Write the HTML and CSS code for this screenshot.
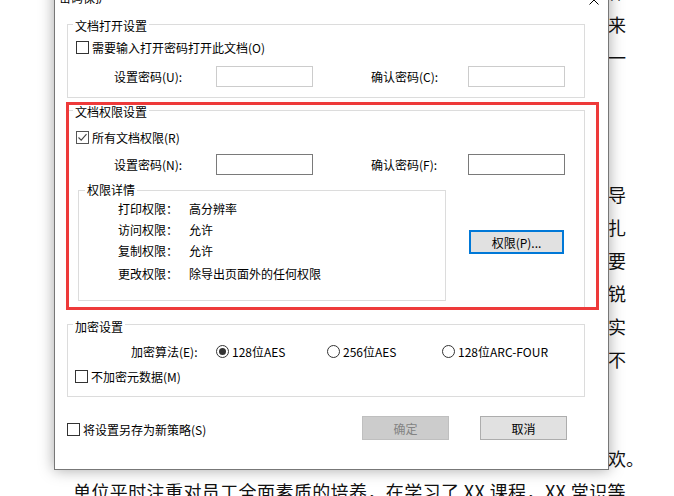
FILE: index.html
```html
<!DOCTYPE html>
<html lang="zh-CN">
<head>
    <meta charset="UTF-8">
    <title>密码保护</title>
    <link rel="stylesheet" href="styles.css">
</head>
<body>
<div class="doc">
    <div class="line">作</div>
    <div class="line">来</div>
    <div class="line">一</div>
    <div class="line"></div>
    <div class="line"></div>
    <div class="line"></div>
    <div class="line para">导</div>
    <div class="line">扎</div>
    <div class="line">要</div>
    <div class="line">锐</div>
    <div class="line">实</div>
    <div class="line">不</div>
    <div class="line"></div>
    <div class="line"></div>
    <div class="line">欢。</div>
    <div class="line first">单位平时注重对员工全面素质的培养，在学习了 XX 课程，XX 常识等</div>
</div>

<div class="dialog">
    <div class="titlebar">
        <span class="title">密码保护</span>
        <svg class="close" width="10" height="10" viewBox="0 0 10 10">
            <path d="M0.5 0.5 L9.5 9.5 M9.5 0.5 L0.5 9.5" stroke="#000" stroke-width="1" fill="none"/>
        </svg>
    </div>
    <div class="dlg-body">
        <!-- 文档打开设置 -->
        <div class="group open-group">
            <div class="group-title">文档打开设置</div>
            <div class="chk-row"><span class="chk"></span>需要输入打开密码打开此文档(O)</div>
            <div class="pw-row">
                <span class="pw-label">设置密码(U):</span>
                <input class="pw-input" type="password" disabled>
                <span class="pw-label second">确认密码(C):</span>
                <input class="pw-input" type="password" disabled>
            </div>
        </div>

        <!-- 文档权限设置 -->
        <div class="group perm-group">
            <div class="group-title">文档权限设置</div>
            <div class="chk-row"><span class="chk on">
                <svg width="11" height="11" viewBox="0 0 11 11"><path d="M1.5 5.5 L4.2 8.2 L9.5 2.2" stroke="#444" stroke-width="1.1" fill="none"/></svg>
            </span>所有文档权限(R)</div>
            <div class="pw-row">
                <span class="pw-label">设置密码(N):</span>
                <input class="pw-input" type="password">
                <span class="pw-label second">确认密码(F):</span>
                <input class="pw-input" type="password">
            </div>
            <div class="detail-wrap">
                <div class="group detail">
                    <div class="group-title">权限详情</div>
                    <div class="detail-row"><span class="detail-label">打印权限：</span>高分辨率</div>
                    <div class="detail-row"><span class="detail-label">访问权限：</span>允许</div>
                    <div class="detail-row"><span class="detail-label">复制权限：</span>允许</div>
                    <div class="detail-row last"><span class="detail-label">更改权限：</span>除导出页面外的任何权限</div>
                </div>
                <button class="btn focus perm-btn">权限(P)...</button>
            </div>
        </div>

        <!-- 加密设置 -->
        <div class="group enc-group">
            <div class="group-title">加密设置</div>
            <div class="radio-row">
                <span class="radio-label">加密算法(E):</span>
                <span class="radio-opt w1"><span class="radio on"></span>128位AES</span>
                <span class="radio-opt w2"><span class="radio"></span>256位AES</span>
                <span class="radio-opt"><span class="radio"></span>128位ARC-FOUR</span>
            </div>
            <div class="chk-row"><span class="chk"></span>不加密元数据(M)</div>
        </div>

        <div class="footer">
            <div class="chk-row"><span class="chk"></span>将设置另存为新策略(S)</div>
            <div class="btns">
                <button class="btn" disabled>确定</button>
                <button class="btn">取消</button>
            </div>
        </div>
    </div>
</div>

<div class="mark"></div>
</body>
</html>
```

FILE: styles.css
```css
*{
    margin: 0;
    padding: 0;
    box-sizing: border-box;
}
body{
    position: relative;
    height: 496px;
    overflow: hidden;
    background: #fff;
    color: #000;
    font-family: "Noto Sans CJK SC", "Noto Sans", sans-serif;
}

/* 背景文档 */
.doc{
    margin-top: -25px;
    font-size: 18px;
    color: #111;
}
.doc .line{
    height: 33px;
    line-height: 33px;
    padding-left: 608px;
    white-space: nowrap;
}
.doc .para{
    margin-top: 5px;
}
.doc .first{
    padding-left: 73px;
    letter-spacing: 0.4px;
}

/* 对话框 */
.dialog{
    position: absolute;
    left: 54px;
    top: -16px;
    width: 555px;
    background: #fff;
    border: 1px solid #777;
    box-shadow: 0 0 14px rgba(0,0,0,0.35);
    font-size: 12px;
}
.titlebar{
    height: 30px;
    display: flex;
    align-items: center;
    justify-content: space-between;
    padding: 0 9px 0 4px;
}
.title{
    line-height: 16px;
    margin-bottom: 4px;
}
.dlg-body{
    padding: 9px 23px 29px 12px;
}
.group{
    border: 1px solid #dcdcdc;
}
.group-title{
    display: table;
    margin: -7px 0 0 5px;
    padding: 0 2px;
    background: #fff;
    line-height: 16px;
}
.chk-row{
    display: flex;
    align-items: center;
    height: 20px;
    white-space: nowrap;
}
.chk{
    width: 13px;
    height: 13px;
    border: 1px solid #333;
    margin-right: 3px;
    display: flex;
    align-items: center;
    justify-content: center;
    background: #fff;
}
.chk.on{
    border-color: #555;
}
.pw-row{
    display: flex;
    align-items: center;
    height: 21px;
    padding-left: 46px;
}
.pw-label{
    width: 102px;
}
.pw-label.second{
    width: 97px;
    margin-left: 58px;
}
.pw-input{
    width: 97px;
    height: 21px;
    border: 1px solid #7a7a7a;
    background: #fff;
    outline: none;
}
.pw-input:disabled{
    border-color: #cccccc;
}

.open-group{
    padding-bottom: 10px;
}
.open-group .chk-row{
    margin-top: 3px;
    padding-left: 8px;
}
.open-group .pw-row{
    margin-top: 9px;
}

.perm-group{
    margin-top: 12px;
    padding-bottom: 8px;
}
.perm-group .chk-row{
    margin-top: 7px;
    padding-left: 8px;
}
.perm-group .pw-row{
    margin-top: 7px;
}
.detail-wrap{
    display: flex;
    align-items: flex-start;
    margin-top: 15px;
    padding-left: 10px;
}
.detail{
    width: 368px;
    padding-bottom: 16px;
}
.detail .group-title{
    margin: -9px 0 0 6px;
}
.detail-row{
    line-height: 21px;
    padding-left: 39px;
}
.detail-row:first-of-type{
    margin-top: 3px;
}
.detail-row.last{
    margin-top: 2px;
}
.detail-label{
    display: inline-block;
    width: 71px;
}

.btn{
    width: 87px;
    height: 24px;
    background: #e1e1e1;
    border: 1px solid #adadad;
    font-family: inherit;
    font-size: 12px;
    color: #000;
}
.btn:disabled{
    background: #cccccc;
    border-color: #bfbfbf;
    color: #838383;
}
.btn.focus{
    border: 2px solid #0078d7;
}
.perm-btn{
    width: 95px;
    margin: 40px 0 0 23px;
}

.enc-group{
    margin-top: 14px;
    padding-bottom: 10px;
}
.enc-group .group-title{
    margin-top: -6px;
}
.radio-row{
    display: flex;
    align-items: center;
    height: 20px;
    margin-top: 6px;
    padding-left: 63px;
    white-space: nowrap;
}
.radio-label{
    width: 85px;
}
.radio-opt{
    display: flex;
    align-items: center;
}
.radio-opt.w1{
    width: 111px;
}
.radio-opt.w2{
    width: 115px;
}
.radio{
    width: 13px;
    height: 13px;
    border: 1px solid #333;
    border-radius: 50%;
    margin-right: 3px;
    display: flex;
    align-items: center;
    justify-content: center;
}
.radio.on::after{
    content: "";
    width: 7px;
    height: 7px;
    border-radius: 50%;
    background: #333;
}
.enc-group .chk-row{
    margin-top: 5px;
    padding-left: 7px;
}

.footer{
    display: flex;
    align-items: center;
    justify-content: space-between;
    height: 24px;
    margin-top: 19px;
    padding-right: 18px;
}
.footer .chk-row{
    margin-top: 2px;
}
.btns{
    display: flex;
    gap: 31px;
}

/* 红色标注框 */
.mark{
    position: absolute;
    left: 66px;
    top: 102px;
    width: 533px;
    height: 208px;
    border: 3px solid #ee3a3a;
}
```
